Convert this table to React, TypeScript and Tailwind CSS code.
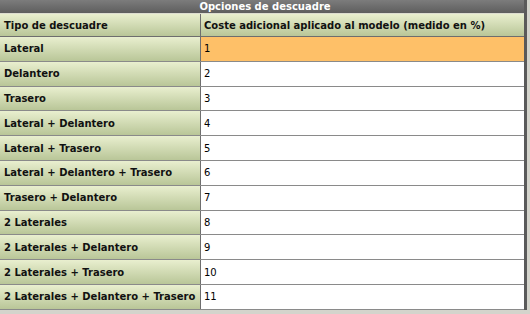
import React from "react";

const rows: [string, string][] = [
  ["Lateral", "1"],
  ["Delantero", "2"],
  ["Trasero", "3"],
  ["Lateral + Delantero", "4"],
  ["Lateral + Trasero", "5"],
  ["Lateral + Delantero + Trasero", "6"],
  ["Trasero + Delantero", "7"],
  ["2 Laterales", "8"],
  ["2 Laterales + Delantero", "9"],
  ["2 Laterales + Trasero", "10"],
  ["2 Laterales + Delantero + Trasero", "11"],
];

export default function App() {
  return (
    <div
      className="w-[530px] h-[314px] bg-[#d4d4cc] overflow-hidden"
      style={{ fontFamily: '"DejaVu Sans", Verdana, sans-serif' }}
    >
      <div className="w-[527px] border-r-[3px] border-[#5a5a5a] bg-white">
        <div className="h-[14px] bg-gradient-to-b from-[#7c7c7c] to-[#5e5e5e] border-b border-[#dcdcd0] flex items-center justify-center pl-[6px] text-white font-bold text-[10px] leading-none">
          Opciones de descuadre
        </div>
        <div className="flex h-[23px] border-b border-[#6e6e6e]">
          <div className="w-[201px] shrink-0 border-r border-[#6e6e6e] bg-gradient-to-b from-[#e9efcf] to-[#b9c698] flex items-center pl-[4px] font-bold text-[10px] text-[#111]">
            Tipo de descuadre
          </div>
          <div className="flex-1 bg-gradient-to-b from-[#e9efcf] to-[#b9c698] flex items-center pl-[3px] font-bold text-[10px] text-[#111]">
            Coste adicional aplicado al modelo (medido en %)
          </div>
        </div>
        {rows.map(([name, val], i) => (
          <div key={name} className="flex h-[24.8px] border-b border-[#8a8a8a]">
            <div className="w-[201px] shrink-0 border-r border-[#6e6e6e] bg-gradient-to-b from-[#e9efcf] to-[#b9c698] flex items-center pl-[4px] font-bold text-[10px] text-[#111]">
              {name}
            </div>
            <div
              className={
                i === 0
                  ? "flex-1 bg-[#fec068] flex items-center pl-[3px] text-[10px] text-black"
                  : "flex-1 bg-white flex items-center pl-[3px] text-[10px] text-black"
              }
            >
              {val}
            </div>
          </div>
        ))}
      </div>
    </div>
  );
}
